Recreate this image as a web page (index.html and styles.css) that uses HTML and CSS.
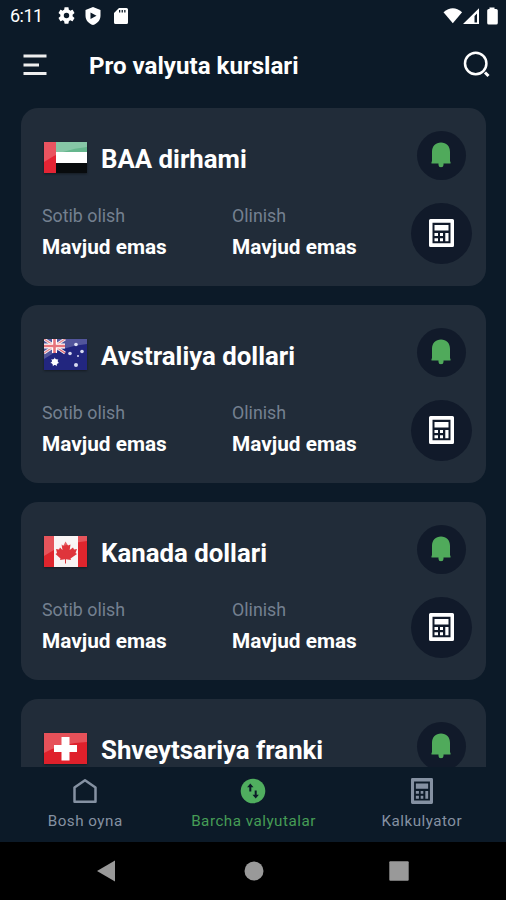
FILE: index.html
```html
<!DOCTYPE html>
<html lang="uz">
<head>
<meta charset="utf-8">
<title>Pro valyuta kurslari</title>
<link rel="stylesheet" href="styles.css">
</head>
<body>
<svg class="sprite" aria-hidden="true">
  <symbol id="bell" viewBox="0 0 20 26">
    <path fill="#50aa5b" d="M0.500 21.500V20L1 19.200V10C1 4 4.700 .5 10 .5S19 4 19 10V19.200L19.500 20V21.500H12.500V23Q12.500 25.300 10 25.300T7.500 23V21.500Z"/>
  </symbol>
  <symbol id="calc" viewBox="0 0 25 28">
    <path fill="currentColor" fill-rule="evenodd" d="M1.500 0H23.500Q25 0 25 1.500V26.500Q25 28 23.500 28H1.500Q0 28 0 26.500V1.500Q0 0 1.500 0ZM3.500 3.700V24.300H21.500V3.700Z"/>
    <path fill="currentColor" d="M5.500 6H19.500V11.500H5.500ZM5.500 14H9V17H5.500ZM11 14H14V17H11ZM5.500 19.200H9V22.300H5.500ZM11 19.200H14V22.300H11ZM16.300 14H19.500V22.300H16.300Z"/>
  </symbol>
</svg>
<div class="screen">
  <header class="status">
    <span class="clock">6:11</span>
    <svg class="ic-gear" width="17" height="17" viewBox="2 2 20 20"><path fill="#fff" d="M19.140 12.940c.04-.3.060-.61.060-.94s-.02-.64-.07-.94l2.030-1.580c.18-.14.230-.41.120-.61l-1.920-3.320c-.12-.22-.37-.29-.59-.22l-2.390.96c-.5-.38-1.030-.7-1.620-.94l-.36-2.540c-.04-.24-.24-.41-.48-.41h-3.840c-.24 0-.43.170-.47.410l-.36 2.540c-.59.240-1.130.570-1.620.94l-2.390-.96c-.22-.08-.47 0-.59.220L2.740 8.870c-.12.210-.08.470.120.610l2.030 1.580c-.05.3-.09.630-.09.94s.02.640.07.940l-2.030 1.580c-.18.140-.23.410-.12.610l1.920 3.320c.12.220.37.290.59.220l2.390-.96c.5.380 1.030.7 1.620.94l.36 2.540c.05.240.24.410.48.410h3.840c.24 0 .44-.17.470-.41l.36-2.540c.59-.24 1.130-.56 1.620-.94l2.390.96c.22.080.47 0 .59-.22l1.920-3.320c.12-.22.070-.47-.12-.61l-2.010-1.580zM12 15.200a3.200 3.200 0 1 1 0-6.400 3.200 3.200 0 0 1 0 6.400z"/></svg>
    <svg class="ic-shield" width="16" height="18" viewBox="0 0 16 18"><path fill="#fff" fill-rule="evenodd" d="M8 0L15.500 3V8.500C15.500 13 12.500 16.700 8 18C3.500 16.700.5 13 .5 8.500V3ZM5.500 5.500V12L11.500 8.700Z"/></svg>
    <svg class="ic-sd" width="14" height="16" viewBox="0 0 14 16"><path fill="#fff" fill-rule="evenodd" d="M5 0H12.500Q14 0 14 1.500V14.500Q14 16 12.500 16H1.500Q0 16 0 14.500V5ZM5 2V4.500H6.300V2ZM7.600 2V4.500H8.900V2ZM10.200 2V4.500H11.500V2Z"/></svg>
    <svg class="ic-signal" width="56" height="18" viewBox="0 0 56 18"><path fill="#fff" d="M.5 5.200Q9.800-2.600 19.100 5.200L9.800 16.300Z"/><path fill="#fff" fill-rule="evenodd" d="M20 17L36 1.200V17ZM31.500 9V15.500H34V6.500Z"/><path fill="#fff" d="M46.500 .5H51.500V2H53.200Q54.800 2 54.800 3.500V16Q54.800 17.500 53.200 17.500H45.700Q44.200 17.500 44.200 16V3.500Q44.200 2 45.700 2H46.500Z"/></svg>
  </header>
  <div class="appbar">
    <svg class="menu" width="24" height="22" viewBox="0 0 24 22"><path stroke="#eee" stroke-width="3" d="M.5 1.900H23.500M.5 10.900H16M.5 19.500H23.500"/></svg>
    <h1>Pro valyuta kurslari</h1>
    <svg class="search" width="28" height="28" viewBox="0 0 28 28"><circle cx="12.700" cy="12.500" r="10.700" fill="none" stroke="#fff" stroke-width="2.500"/><path d="M22 21.500L25.500 25" stroke="#fff" stroke-width="3"/></svg>
  </div>
  <main class="list">
    <article class="card">
      <div class="info">
        <div class="name">
          <svg class="flag" viewBox="0 0 43 31"><path fill="#fff" d="M0 0H43V31H0Z"/><path fill="#65b68d" d="M12 0H43V10H12Z"/><path fill="#080b0d" d="M12 21H43V31H12Z"/><path fill="#e52434" d="M0 0H12V31H0Z"/><path class="gloss" d="M0 0H43V5Q18 7 0 20Z"/></svg>
          <h2>BAA dirhami</h2>
        </div>
        <dl class="rates"><div><dt>Sotib olish</dt><dd>Mavjud emas</dd></div><div><dt>Olinish</dt><dd>Mavjud emas</dd></div></dl>
      </div>
      <div class="actions"><span class="round"><svg class="bell"><use href="#bell"/></svg></span><span class="round large"><svg class="calc"><use href="#calc"/></svg></span></div>
    </article>
    <article class="card">
      <div class="info">
        <div class="name">
          <svg class="flag" viewBox="0 0 43 31"><path fill="#22267f" d="M0 0H43V31H0Z"/><path stroke="#eee" stroke-width="3" d="M0 0L21 14M21 0L0 14"/><path stroke="#e2606b" stroke-width="1.200" d="M0 0L21 14M21 0L0 14"/><path stroke="#fff" stroke-width="5" d="M10.500 0V14M0 7H21"/><path stroke="#e14d58" stroke-width="2.600" d="M10.500 0V14M0 7H21"/><circle cx="10.800" cy="23" r="3" fill="#fff"/><path fill="#fff" d="M10.800 18.500l1 2.300 2.500-.6-1.100 2.300 2 1.600-2.500.5v2.600l-1.900-1.700-2 1.700v-2.600l-2.500-.5 2.100-1.600-1.200-2.300 2.500.6z"/><g fill="#d8dbf1"><circle cx="32" cy="5.500" r="1.800"/><circle cx="26" cy="14.500" r="1.800"/><circle cx="38" cy="12.500" r="1.800"/><circle cx="34" cy="17" r="1"/><circle cx="32" cy="26" r="2"/></g><path class="gloss" d="M0 0H43V5Q18 7 0 20Z"/></svg>
          <h2>Avstraliya dollari</h2>
        </div>
        <dl class="rates"><div><dt>Sotib olish</dt><dd>Mavjud emas</dd></div><div><dt>Olinish</dt><dd>Mavjud emas</dd></div></dl>
      </div>
      <div class="actions"><span class="round"><svg class="bell"><use href="#bell"/></svg></span><span class="round large"><svg class="calc"><use href="#calc"/></svg></span></div>
    </article>
    <article class="card">
      <div class="info">
        <div class="name">
          <svg class="flag" viewBox="0 0 43 31"><path fill="#f8f3f3" d="M0 0H43V31H0Z"/><path fill="#df252d" d="M0 0H10V31H0ZM34 0H43V31H34Z"/><path fill="#df353b" d="M21.500 5.500L24 9.500 26.500 8.500 25.700 14 29 11.500 30 13.500 33 13 31.500 17 33 18 26.500 22.500 27 24 22 23.300V27.500H21V23.300L16 24 16.500 22.500 11.500 18 13 17 12 13 15 13.500 16 11.500 18.500 14 17.500 8.500 19.500 9.500Z"/><path class="gloss" d="M0 0H43V5Q18 7 0 20Z"/></svg>
          <h2>Kanada dollari</h2>
        </div>
        <dl class="rates"><div><dt>Sotib olish</dt><dd>Mavjud emas</dd></div><div><dt>Olinish</dt><dd>Mavjud emas</dd></div></dl>
      </div>
      <div class="actions"><span class="round"><svg class="bell"><use href="#bell"/></svg></span><span class="round large"><svg class="calc"><use href="#calc"/></svg></span></div>
    </article>
    <article class="card">
      <div class="info">
        <div class="name">
          <svg class="flag" viewBox="0 0 43 31"><path fill="#df202b" d="M0 0H43V31H0Z"/><path class="gloss" d="M0 0H43V9Q18 10 0 20Z"/><path fill="#fff" d="M17.500 4H25.500V12H33V19H25.500V27.500H17.500V19H10V12H17.500Z"/></svg>
          <h2>Shveytsariya franki</h2>
        </div>
      </div>
      <div class="actions"><span class="round"><svg class="bell"><use href="#bell"/></svg></span></div>
    </article>
  </main>
  <nav class="tabs">
    <div class="tab"><svg width="26" height="26" viewBox="0 0 26 26"><path fill="none" stroke="#8591a2" stroke-width="2.500" stroke-linejoin="round" d="M2.500 9.500L13 2.300 23.500 9.500V23.700H2.500Z"/></svg><span>Bosh oyna</span></div>
    <div class="tab active"><svg width="26" height="26" viewBox="0 0 26 26"><circle cx="13" cy="13" r="12.300" fill="#50ae5f"/><path fill="none" stroke="#0c1a28" stroke-width="2" d="M10.300 13.500V8M15.700 12.500V18"/><path fill="#0c1a28" d="M10.300 5.500L13.500 9.300H7.100ZM15.700 20.500L12.500 16.700H18.900Z"/></svg><span>Barcha valyutalar</span></div>
    <div class="tab"><svg width="22" height="26" viewBox="0 0 25 28" preserveAspectRatio="none"><use href="#calc" width="25" height="28"/></svg><span>Kalkulyator</span></div>
  </nav>
  <footer class="system">
    <svg width="18" height="22" viewBox="0 0 18 22"><path fill="#999" d="M18 .5V21.500L0 11Z"/></svg>
    <svg class="home" width="20" height="20" viewBox="0 0 20 20"><circle cx="10" cy="10" r="9.500" fill="#999"/></svg>
    <svg width="20" height="20" viewBox="0 0 20 20"><rect x=".3" y=".3" width="19.400" height="19.400" rx="1" fill="#999"/></svg>
  </footer>
</div>
</body>
</html>
```

FILE: styles.css
```css
* { box-sizing: border-box; }
body { margin: 0; background: #0c1a28; color: #fff; font-family: Roboto, "Liberation Sans", sans-serif; }
svg { display: block; flex: none; }
.sprite { display: none; }
h1, h2, dl, dd { margin: 0; }
.screen { display: flex; flex-direction: column; width: 506px; height: 900px; overflow: hidden; }
.status { display: flex; align-items: center; height: 31px; padding: 0 7px 0 10px; }
.clock { width: 48px; padding-top: 1px; font-size: 18px; line-height: 30px; letter-spacing: -.5px; white-space: nowrap; }
.ic-shield { margin-left: 10px; }
.ic-sd { margin-left: 13px; }
.ic-signal { margin-left: auto; }
.appbar { display: flex; align-items: center; height: 67px; padding: 0 15px 0 23px; }
h1 { flex: 1; margin-left: 42px; padding-top: 2px; font-size: 24.100px; font-weight: 700; line-height: 32px; white-space: nowrap; }
.menu { margin-top: 1px; }
.list { flex: 1; min-height: 0; overflow: hidden; display: flex; flex-direction: column; gap: 19px; padding: 10.400px 20px 0 21px; }
.card { flex: none; display: flex; justify-content: space-between; height: 178px; padding: 22.600px 14px 0 21px; border-radius: 17px; background: #212c39; }
.name { display: flex; align-items: center; height: 56px; }
.flag { width: 43px; height: 31px; margin: 0 0 3px 2px; filter: drop-shadow(0 1px 1px #0006); }
.gloss { fill: #fff; opacity: .22; }
h2 { margin-left: 14px; padding-top: 1px; font-size: 25.800px; font-weight: 700; line-height: 32px; white-space: nowrap; }
.rates { display: flex; margin-top: 17px; }
.rates div { width: 190px; }
.rates div:last-child { width: 130px; }
dt { color: #748090; font-size: 17.800px; line-height: 24px; white-space: nowrap; }
dd { margin-top: 5px; font-size: 20.800px; font-weight: 700; line-height: 28px; white-space: nowrap; }
.actions { display: flex; flex-direction: column; align-items: center; gap: 23px; width: 61px; }
.round { display: grid; place-items: center; flex: none; width: 49px; height: 49px; margin-right: 1px; border-radius: 50%; background: #111a2a; }
.large { width: 61px; height: 61px; margin-right: 0; }
.bell { width: 20px; height: 26px; }
.calc { width: 25px; height: 28px; }
.tabs { flex: none; display: flex; height: 75px; padding: 11px 0 0 1px; }
.tab { flex: 1; display: flex; flex-direction: column; align-items: center; gap: 6px; color: #8591a2; font-size: 15.200px; letter-spacing: .5px; line-height: 22px; white-space: nowrap; }
.active { color: #469d56; }
.system { flex: none; display: flex; align-items: center; justify-content: space-between; height: 58px; padding: 0 97px; background: #000; }
.home { margin-left: 3px; }
```
